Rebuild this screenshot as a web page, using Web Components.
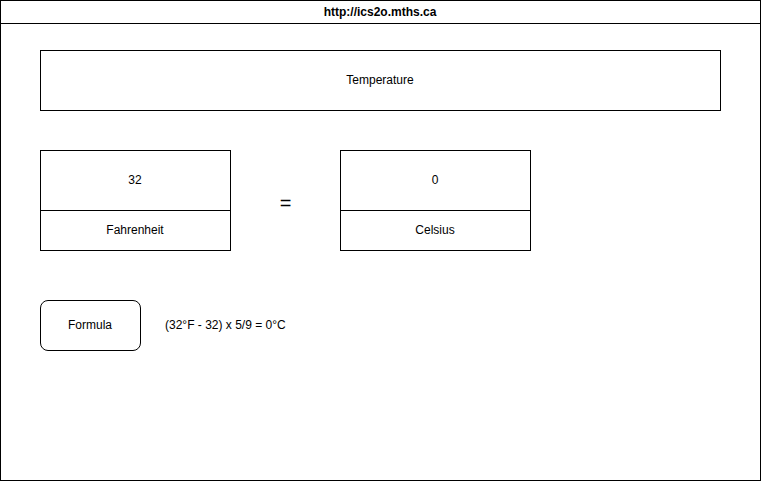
<!DOCTYPE html>
<html lang="en">
<head>
<meta charset="utf-8">
<meta name="viewport" content="width=device-width, initial-scale=1">
<title>Temperature</title>
<style>
  body { margin: 0; background: #fff; color: #000; font: 12px/14px "Liberation Sans", Arial, sans-serif; }
</style>
</head>
<body>
<app-window>
  <span slot="address">http://ics2o.mths.ca</span>
  <page-title>Temperature</page-title>
  <temperature-converter></temperature-converter>
</app-window>

<script>
class AppWindow extends HTMLElement {
  constructor() {
    super();
    this.attachShadow({ mode: "open" }).innerHTML = `
      <style>
        :host { display: flex; flex-direction: column; box-sizing: border-box; min-height: calc(100vh - 1px); border: 1px solid #000; }
        header { padding: 4px 9px 4px 8px; border-bottom: 1px solid #000; text-align: center; font-weight: bold; }
        main { padding: 26px 39px; }
      </style>
      <header><slot name="address"></slot></header>
      <main><slot></slot></main>`;
  }
}

class PageTitle extends HTMLElement {
  constructor() {
    super();
    this.attachShadow({ mode: "open" }).innerHTML = `
      <style>
        :host { display: block; margin-bottom: 39px; border: 1px solid #000; }
        h1 { margin: 0; padding: 22px 9px 23px 8px; font: inherit; text-align: center; }
      </style>
      <h1><slot></slot></h1>`;
  }
}

class TemperatureField extends HTMLElement {
  constructor() {
    super();
    this.attachShadow({ mode: "open" }).innerHTML = `
      <style>
        :host { display: flex; flex-direction: column; flex: 0 1 191px; min-width: 0; box-sizing: border-box; border: 1px solid #000; text-align: center; }
        input { box-sizing: border-box; width: 100%; margin: 0; padding: 22px 9px 23px 8px; border: 0; border-bottom: 1px solid #000; border-radius: 0; background: none; color: inherit; font: inherit; line-height: 14px; height: 60px; text-align: center; }
        label { padding: 12px 9px 13px 8px; }
      </style>
      <input id="value" type="text" inputmode="decimal">
      <label for="value"><slot></slot></label>`;
    this.input = this.shadowRoot.querySelector("input");
    this.input.value = this.getAttribute("value");
    this.input.readOnly = this.hasAttribute("readonly");
  }
  get value() { return this.input.value; }
  set value(v) { this.input.value = v; }
}

class TemperatureConverter extends HTMLElement {
  constructor() {
    super();
    this.attachShadow({ mode: "open" }).innerHTML = `
      <style>
        :host { display: grid; gap: 49px; }
        .fields { display: flex; align-items: center; }
        .equals { flex: 0 1 109px; padding-top: 4px; text-align: center; font-size: 20px; line-height: 24px; }
        .formula { display: flex; align-items: baseline; gap: 24px; }
        button { box-sizing: border-box; min-width: 101px; margin: 0; padding: 17px 9px 18px 8px; border: 1px solid #000; border-radius: 8px; background: #fff; color: inherit; font: inherit; }
        p { margin: 0; }
      </style>
      <div class="fields">
        <temperature-field id="f" value="32">Fahrenheit</temperature-field>
        <span class="equals">=</span>
        <temperature-field id="c" value="0" readonly>Celsius</temperature-field>
      </div>
      <div class="formula">
        <button type="button">Formula</button>
        <p>(32°F - 32) x 5/9 = 0°C</p>
      </div>`;
    const root = this.shadowRoot;
    const f = root.getElementById("f");
    const c = root.getElementById("c");
    const text = root.querySelector("p");
    f.addEventListener("input", () => {
      const n = Number(f.value);
      if (Number.isNaN(n)) return;
      c.value = Math.round((n - 32) * 500 / 9) / 100;
      text.textContent = `(${n}°F - 32) x 5/9 = ${c.value}°C`;
    });
    root.querySelector("button").addEventListener("click", () => { text.hidden = !text.hidden; });
  }
}

customElements.define("app-window", AppWindow);
customElements.define("page-title", PageTitle);
customElements.define("temperature-field", TemperatureField);
customElements.define("temperature-converter", TemperatureConverter);
</script>
</body>
</html>
